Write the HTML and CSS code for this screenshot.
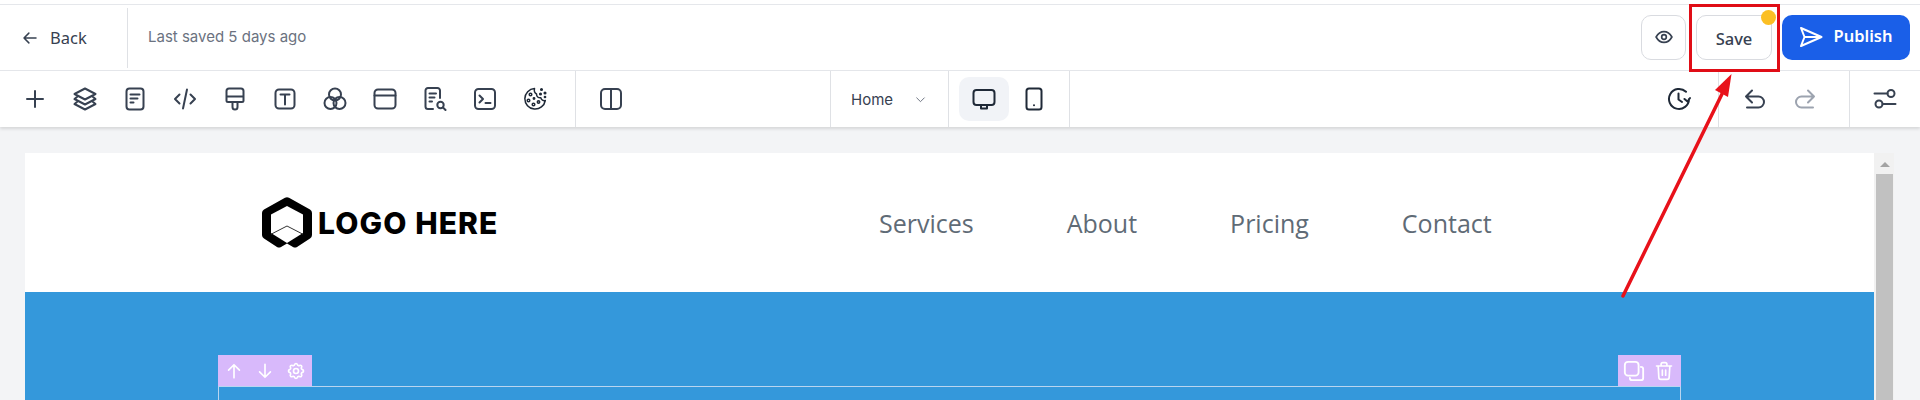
FILE: index.html
```html
<!DOCTYPE html>
<html lang="en">
<head>
<meta charset="utf-8">
<title>Page editor</title>
<link rel="stylesheet" href="styles.css">
</head>
<body>
<div class="app">
  <header class="topbar">
    <a class="back">
      <svg class="i18" viewBox="0 0 24 24"><path d="M20 12H4M10.500 5.500 4 12l6.500 6.500"/></svg>
      <span>Back</span>
    </a>
    <div class="saved">Last saved 5 days ago</div>
    <div class="actions">
      <button class="btn icon-btn"><svg class="i20" viewBox="0 0 24 24"><path d="M2.500 12C5 7.500 8.200 5.500 12 5.500s7 2 9.500 6.500c-2.500 4.500-5.700 6.500-9.500 6.500S5 16.500 2.500 12Z"/><circle cx="12" cy="12" r="2.800"/></svg></button>
      <button class="btn save"><span class="save-label">Save</span><span class="dot"></span></button>
      <button class="btn publish"><svg class="i24" viewBox="0 0 24 24"><path d="M2 3 22.500 12 2 21l3.500-9ZM5.500 12h17"/></svg><span class="publish-label">Publish</span></button>
    </div>
  </header>
  <nav class="toolbar">
    <div class="tools">
      <button class="tool"><svg class="i24" viewBox="0 0 24 24"><path d="M12 4v16M4 12h16"/></svg></button>
      <button class="tool"><svg class="i24" viewBox="0 0 24 24"><path d="M12 1.500 22.500 7 12 12.500 1.500 7ZM4.500 9.500 1.500 12 12 17.500 22.500 12l-3-2.500M4.500 14.500 1.500 17 12 22.500 22.500 17l-3-2.500"/></svg></button>
      <button class="tool"><svg class="i24" viewBox="0 0 24 24"><rect x="3.500" y="1.500" width="17" height="21" rx="3"/><path d="M7.500 7.500h9M7.500 11.500h7M7.500 15.500h3"/></svg></button>
      <button class="tool"><svg class="i24" viewBox="0 0 24 24"><path d="M6.500 7.500 2 12l4.500 4.500M17.500 7.500 22 12l-4.500 4.500M14 2.500 10 21.500"/></svg></button>
      <button class="tool"><svg class="i24" viewBox="0 0 24 24"><path d="M3.500 4A2.500 2.500 0 0 1 6 1.500h12A2.500 2.500 0 0 1 20.500 4v9.500A1.500 1.500 0 0 1 19 15H5a1.500 1.500 0 0 1-1.500-1.500ZM3.500 9.500h17M9.500 15v5a2.500 2.500 0 0 0 5 0v-5"/></svg></button>
      <button class="tool"><svg class="i24" viewBox="0 0 24 24"><rect x="2.500" y="2.500" width="19" height="19" rx="3.500"/><path d="M7.500 7.500h9M12 7.500v10"/></svg></button>
      <button class="tool"><svg class="i24" viewBox="0 0 24 24"><circle cx="12" cy="7.500" r="6"/><circle cx="7.500" cy="16" r="6"/><circle cx="16.500" cy="16" r="6"/></svg></button>
      <button class="tool"><svg class="i24" viewBox="0 0 24 24"><rect x="1.500" y="2.500" width="21" height="19" rx="3.500"/><path d="M1.500 8.500h21"/></svg></button>
      <button class="tool"><svg class="i24" viewBox="0 0 24 24"><path d="M10 22H5a2.500 2.500 0 0 1-2.500-2.500v-16A2.500 2.500 0 0 1 5 1H14.500A2.500 2.500 0 0 1 17 3.500V11M6.500 6.500h6.500M6.500 10.500h5M6.500 14.500h2.500"/><circle cx="17.500" cy="18" r="3.200"/><path d="m20 20.500 2.500 2.500"/></svg></button>
      <button class="tool"><svg class="i24" viewBox="0 0 24 24"><rect x="2" y="2" width="20" height="20" rx="3.500"/><path d="m6.500 8.500 3.500 3.500-3.500 3.500M12.500 16h5"/></svg></button>
      <button class="tool"><svg class="i24 cookie" viewBox="0 0 24 24"><path d="M11.500 1.500a10.300 10.300 0 1 0 10.800 12c-2.200.5-4-.5-4.500-2.800-2.500.3-4.300-1-4.300-3.700-1.700-1-2.500-3.500-2-5.500Z"/><circle cx="7.500" cy="7.500" r="1.300"/><circle cx="5.500" cy="13.500" r="1.300"/><circle cx="10.500" cy="17.500" r="1.300"/><circle cx="15.500" cy="15" r="1.200"/><circle cx="11" cy="11.500" r=".7"/><circle cx="18.500" cy="2.500" r=".8"/><circle cx="22" cy="6" r=".8"/><circle cx="17.500" cy="7" r=".8"/><circle cx="22" cy="10" r=".6"/></svg></button>
    </div>
    <div class="split-group">
      <button class="tool"><svg class="i24" viewBox="0 0 24 24"><rect x="2" y="2" width="20" height="20" rx="4"/><path d="M12 2v20"/></svg></button>
    </div>
    <div class="page-select"><span>Home</span><svg class="i14" viewBox="0 0 24 24"><path d="m5 9 7 7 7-7"/></svg></div>
    <div class="devices">
      <button class="device active"><svg class="i24" viewBox="0 0 24 24"><rect x="1.500" y="3" width="21" height="15" rx="3"/><path d="M9 18v3.500h6V18"/></svg></button>
      <button class="device"><svg class="i24" viewBox="0 0 24 24"><rect x="4.500" y="1.500" width="15" height="21" rx="2.500"/><path d="M12 18.200h.01"/></svg></button>
    </div>
    <div class="history">
      <button class="tool"><svg class="i24 dark" viewBox="0 0 24 24"><path d="M22 12a10 10 0 1 1-3-7.200M11.500 6.500v6l3.500 2.500M23 11l-2.500 3.500-3-2.500"/></svg></button>
    </div>
    <div class="undo">
      <button class="tool"><svg class="i24" viewBox="0 0 24 24"><path d="M9 3.500 3 9.500l6 6M3 9.500h12.500a5.500 5.500 0 0 1 5.500 5.500v0a5.500 5.500 0 0 1-5.500 5.500H4"/></svg></button>
      <button class="tool muted"><svg class="i24" viewBox="0 0 24 24"><path d="M15 3.500l6 6-6 6M21 9.500H8.500A5.500 5.500 0 0 0 3 15v0a5.500 5.500 0 0 0 5.500 5.500H20"/></svg></button>
    </div>
    <div class="settings">
      <button class="tool"><svg class="i24" viewBox="0 0 24 24"><circle cx="18" cy="6.500" r="3.500"/><circle cx="6" cy="17" r="3.500"/><path d="M1.500 6.500h13M9.500 17h13"/></svg></button>
    </div>
  </nav>
  <main class="canvas">
    <div class="preview">
      <div class="site-head">
        <div class="logo">
          <svg class="logo-mark" viewBox="0 0 52 52"><path class="mark-outer" d="M24 .8a4 4 0 0 1 4 0L49 12.500a4 4 0 0 1 2 3.500v22a4 4 0 0 1-2 3.500l-13 8.500a4 4 0 0 1-4 0l-6-3.500-6 3.500a4 4 0 0 1-4 0L3 41.500a4 4 0 0 1-2-3.500V16a4 4 0 0 1 2-3.500Z"/><path class="mark-inner" d="M26 9l16 8.500V36L26 46 10 36V17.500Z"/><path class="mark-line" d="M10.500 37 26 29l15.500 8"/></svg>
          <span>LOGO HERE</span>
        </div>
        <ul class="menu">
          <li>Services</li>
          <li>About</li>
          <li>Pricing</li>
          <li>Contact</li>
        </ul>
      </div>
      <div class="hero">
        <div class="section">
          <div class="handles">
            <div class="handle">
              <svg class="i20" viewBox="0 0 24 24"><path d="M12 20V4.500M5.500 11 12 4.500l6.500 6.500"/></svg>
              <svg class="i20" viewBox="0 0 24 24"><path d="M12 4v15.500M5.500 13l6.500 6.500 6.500-6.500"/></svg>
              <svg class="i20" viewBox="0 0 24 24"><path d="M10.325 4.317c.426-1.756 2.924-1.756 3.350 0a1.724 1.724 0 0 0 2.573 1.066c1.543-.94 3.310.826 2.370 2.370a1.724 1.724 0 0 0 1.065 2.572c1.756.426 1.756 2.924 0 3.350a1.724 1.724 0 0 0-1.066 2.573c.94 1.543-.826 3.310-2.370 2.370a1.724 1.724 0 0 0-2.572 1.065c-.426 1.756-2.924 1.756-3.350 0a1.724 1.724 0 0 0-2.573-1.066c-1.543.94-3.310-.826-2.370-2.370a1.724 1.724 0 0 0-1.065-2.572c-1.756-.426-1.756-2.924 0-3.350a1.724 1.724 0 0 0 1.066-2.573c-.94-1.543.826-3.310 2.370-2.370 1 .608 2.296.07 2.572-1.065z"/><circle cx="12" cy="12" r="3"/></svg>
            </div>
            <div class="handle right">
              <svg class="i22" viewBox="0 0 24 24"><rect x="2" y="2" width="15" height="15" rx="3.500"/><path d="M19.500 7.500A2.500 2.500 0 0 1 22 10v9.500a2.500 2.500 0 0 1-2.500 2.500H10A2.500 2.500 0 0 1 7.500 19.500"/></svg>
              <svg class="i20" viewBox="0 0 24 24"><path d="M3 6h18M8.500 6V4a2 2 0 0 1 2-2h3a2 2 0 0 1 2 2v2M5 6l.8 13.500A2.500 2.500 0 0 0 8.300 22h7.400a2.500 2.500 0 0 0 2.500-2.500L19 6M10 11v6M14 11v6"/></svg>
            </div>
          </div>
          <div class="section-box"></div>
        </div>
      </div>
    </div>
    <div class="scrollbar"><span class="scroll-up"></span><div class="thumb"></div></div>
  </main>
  <div class="callout"></div>
  <svg class="callout-arrow" viewBox="0 0 1920 400"><path d="M1623 296 1722 94"/><polygon points="1731.500,74 1715,90 1728,97"/></svg>
</div>
</body>
</html>
```
FILE: styles.css
```css
* { box-sizing: border-box; }
html, body { margin: 0; height: 400px; overflow: hidden; background: #fff; }
body { font-family: "Inter", "Liberation Sans", sans-serif; color: #374151; }
button { font: inherit; color: inherit; background: none; border: 0; padding: 0; }
svg { fill: none; stroke: currentColor; stroke-width: 2; stroke-linecap: round; stroke-linejoin: round; display: block; flex: none; }
.i14 { width: 13px; height: 13px; stroke-width: 1.8; color: #6b7280; }
.i18 { width: 18px; height: 18px; }
.i20 { width: 20px; height: 20px; }
.i22 { width: 22px; height: 22px; }
.i24 { width: 24px; height: 24px; }
.dark { color: #1f2937; }
.cookie { color: #1f2937; stroke-width: 1.5; }
.app { position: relative; height: 400px; overflow: hidden; }

.topbar { height: 71px; display: flex; align-items: center; padding-top: 5px; border-bottom: 1px solid #e5e7eb; background: linear-gradient(#fff 4px, #e5e7eb 4px, #e5e7eb 5px, #fff 5px); }
.back { width: 128px; height: 60px; border-right: 1px solid #dfe1e5; display: flex; align-items: center; gap: 11px; padding-left: 21px; font-family: "Noto Sans", sans-serif; font-size: 16.5px; color: #374151; }
.saved { padding-left: 20px; font-size: 15px; color: #6b7280; margin-top: -2px; }
.actions { margin-left: auto; display: flex; align-items: center; gap: 10px; padding-right: 10px; margin-top: -1px; }
.btn { height: 45px; border-radius: 10px; display: flex; align-items: center; justify-content: center; }
.icon-btn { width: 45px; border: 1px solid #d9dbe0; color: #374151; }
.save { position: relative; width: 76px; border: 1px solid #d9dbe0; font-family: "Noto Sans", sans-serif; font-size: 16.5px; font-weight: 500; }
.save-label { padding-top: 3px; }
.dot { position: absolute; right: -5px; top: -6px; width: 15px; height: 15px; border-radius: 50%; background: #fbbf24; }
.publish { width: 128px; background: #1a5fe8; color: #fff; gap: 10px; font-family: "Noto Sans", sans-serif; font-size: 16.5px; font-weight: 600; }
.publish-label { padding-bottom: 3px; }

.toolbar { height: 56px; display: flex; align-items: stretch; background: #fff; position: relative; box-shadow: 0 2px 3px rgba(0,0,0,.12); }
.tool { width: 50px; display: flex; align-items: center; justify-content: center; color: #374151; }
.muted { color: #9ca3af; }
.tools { display: flex; padding-left: 10px; width: 576px; border-right: 1px solid #dfe1e5; }
.split-group { display: flex; padding-left: 10px; width: 255px; border-right: 1px solid #dfe1e5; }
.page-select { width: 118px; display: flex; align-items: center; padding-left: 20px; gap: 21px; border-right: 1px solid #dfe1e5; font-size: 15px; color: #374151; }
.devices { width: 121px; display: flex; align-items: center; padding-left: 10px; border-right: 1px solid #dfe1e5; }
.device { width: 50px; height: 44px; border-radius: 10px; display: flex; align-items: center; justify-content: center; color: #1f2937; }
.active { background: #f1f3f7; }
.history { flex: 1; display: flex; justify-content: flex-end; padding-right: 14px; border-right: 1px solid #dfe1e5; }
.undo { width: 131px; display: flex; padding-left: 11px; border-right: 1px solid #dfe1e5; }
.settings { width: 70px; display: flex; padding-left: 10px; }

.canvas { height: 273px; overflow: hidden; background: #f3f4f6; display: flex; padding: 26px 26px 0 25px; }
.preview { flex: 1; background: #fff; display: flex; flex-direction: column; }
.scrollbar { width: 20px; background: #f1f1f1; padding: 9px 1px 0 2px; display: flex; flex-direction: column; align-items: center; }
.scroll-up { flex: none; width: 0; height: 0; border: 5px solid transparent; border-top: 0; border-bottom-color: #a3a3a3; margin-bottom: 7px; }
.thumb { align-self: stretch; flex: 1; background: #c1c1c1; }
.site-head { flex: none; height: 139px; display: flex; align-items: center; padding-left: 236px; }
.logo { display: flex; align-items: center; gap: 5px; width: 618px; font-size: 30px; font-weight: 800; letter-spacing: 1.1px; color: #000; }
.logo-mark { width: 52px; height: 52px; stroke: none; }
.mark-outer { fill: #000; }
.mark-inner { fill: #fff; }
.mark-line { fill: none; stroke: #333; stroke-width: 1; }
.menu { display: flex; gap: 93px; margin: 0; padding: 0; list-style: none; font-family: "Open Sans", sans-serif; font-size: 25px; color: #5f6b76; }
.hero { flex: 1; background: #3498db; padding: 63px 193px 0 193px; }
.handles { display: flex; justify-content: space-between; }
.handle { height: 31px; width: 94px; background: #d8b9fb; color: #fff; display: flex; align-items: center; gap: 11px; padding-left: 6px; }
.handle.right { width: 63px; gap: 9px; padding-left: 5px; }
.section-box { height: 120px; border: 1px solid #b9d5f0; }

.callout { position: absolute; left: 1689px; top: 4px; width: 91px; height: 68px; border: 3px solid #e00d16; pointer-events: none; }
.callout-arrow { position: absolute; left: 0; top: 0; width: 1920px; height: 400px; color: #e8111a; stroke-width: 3.5; pointer-events: none; }
.callout-arrow polygon { fill: currentColor; stroke: none; }
```
